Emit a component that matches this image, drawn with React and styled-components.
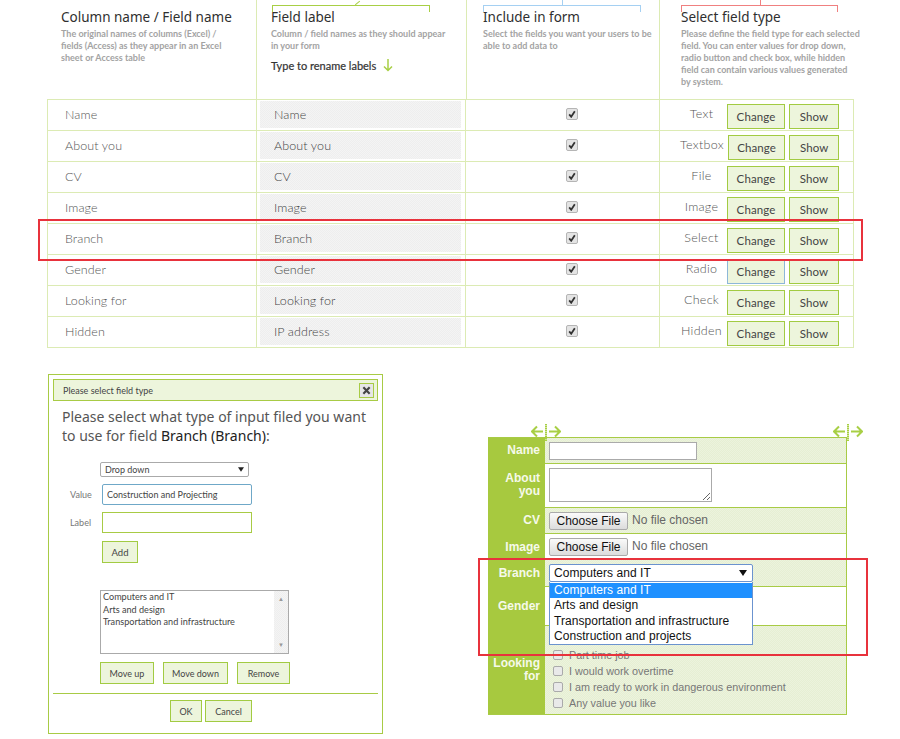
import React from "react";
import styled, { createGlobalStyle, css } from "styled-components";

const Global = createGlobalStyle`
  html, body { margin: 0; padding: 0; background: #fff; }
  #root { width: 900px; height: 739px; overflow: hidden; }
`;

const GREEN = "#a8cb45";
const PALE = "#dcebb4";
const hatchGrey = css`
  background: repeating-conic-gradient(#eeeeee 0 25%, #f4f4f4 0 50%) 0 0 / 2px 2px;
`;
const hatchGreen = css`
  background: repeating-conic-gradient(#e6efd3 0 25%, #ecf3dd 0 50%) 0 0 / 2px 2px;
`;
const UI = `"Lato", "Open Sans", sans-serif`;

const Page = styled.div`
  position: relative;
  width: 900px;
  height: 739px;
  overflow: hidden;
  font-family: ${UI};
  color: #333;
`;
const Header = styled.div`
  display: grid;
  grid-template-columns: 209px 210px 193px 195px;
  height: 99px;
  margin-left: 47px;
`;
const HeadCell = styled.div`
  position: relative;
  box-sizing: border-box;
  padding: 9px 0 0 ${(p) => p.$pad}px;
  border-left: ${(p) => (p.$line ? `1px solid ${PALE}` : "0")};
`;
const HeadTitle = styled.h2`
  margin: 0;
  font-size: 13.5px;
  line-height: 17px;
  font-weight: 400;
  font-family: "Noto Sans", sans-serif;
  color: #2f2f2f;
  white-space: nowrap;
`;
const HeadText = styled.p`
  margin: 2px 0 0;
  font-size: 9px;
  line-height: 12px;
  font-weight: 700;
  color: #a3a3a3;
  white-space: nowrap;
`;
const Hint = styled.div`
  display: flex;
  align-items: center;
  gap: 7px;
  margin-top: 7px;
  font-size: 11px;
  font-weight: 400;
  -webkit-text-stroke: 0.2px #333;
  color: #333;
`;
const Bracket = styled.div`
  position: absolute;
  top: 5px;
  left: ${(p) => p.$left}px;
  width: ${(p) => p.$width}px;
  height: 7px;
  box-sizing: border-box;
  border: 1px solid ${(p) => p.$color};
  border-bottom: 0;
  &::before {
    content: "";
    position: absolute;
    left: ${(p) => p.$tick}px;
    top: -6px;
    width: 1px;
    height: 6px;
    background: ${(p) => p.$color};
    transform: rotate(${(p) => p.$tilt || 0}deg);
  }
`;
const Table = styled.div`
  margin-left: 47px;
  width: 807px;
  border: 1px solid ${PALE};
  border-bottom: 0;
  box-sizing: border-box;
`;
const Row = styled.div`
  display: grid;
  grid-template-columns: 208px 209px 194px 194px;
  height: 31px;
  box-sizing: border-box;
  border-bottom: 1px solid ${PALE};
`;
const Cell = styled.div`
  display: flex;
  align-items: center;
  box-sizing: border-box;
  border-left: ${(p) => (p.$line ? `1px solid ${PALE}` : "0")};
`;
const NameCell = styled(Cell)`
  padding: 0 0 2px 17px;
  font-size: 12.5px;
  font-weight: 300;
  letter-spacing: 0.1px;
  color: #555;
`;
const LabelCell = styled(Cell)`
  padding: 1px 4px 2px 3px;
`;
const RenameInput = styled.input`
  width: 100%;
  height: 100%;
  box-sizing: border-box;
  border: 0;
  outline: 0;
  padding: 0 0 0 14px;
  ${hatchGrey};
  font: 300 12.5px ${UI};
  letter-spacing: 0.1px;
  color: #444;
`;
const CheckCell = styled(Cell)`
  justify-content: center;
  padding: 0 0 3px 18px;
`;
const Check = styled.span`
  display: inline-flex;
  align-items: center;
  justify-content: center;
  width: 10px;
  height: 10px;
  border: 1px solid #b5b5b5;
  border-radius: 2px;
  background: #e4e4e4;
`;
const TypeCell = styled(Cell)`
  padding-right: 14px;
  gap: 4px;
`;
const TypeName = styled.span`
  flex: 0 0 63px;
  box-sizing: border-box;
  text-align: center;
  padding: 0 0 3px 20px;
  font-size: 12.5px;
  font-weight: 300;
  letter-spacing: 0.3px;
  color: #555;
  white-space: nowrap;
`;
const Btn = styled.button`
  box-sizing: border-box;
  width: ${(p) => p.$w}px;
  height: ${(p) => p.$h || 22}px;
  padding: 0;
  border: 1px solid ${(p) => (p.$focus ? "#8db7d8" : "#a2cb42")};
  background: #edf5dc;
  font: 400 ${(p) => p.$size || 9}px ${UI};
  color: #444;
`;
const RowBtn = styled(Btn)`
  margin-top: 3px;
  padding-bottom: 1px;
  font-size: 11.5px;
  letter-spacing: 0.1px;
`;
const Bottom = styled.div`
  display: flex;
  align-items: flex-start;
  margin: 26px 0 0 48px;
`;
const Dialog = styled.div`
  box-sizing: border-box;
  width: 335px;
  height: 360px;
  border: 1px solid ${GREEN};
  padding: 4px;
`;
const TitleBar = styled.div`
  display: flex;
  align-items: center;
  justify-content: space-between;
  box-sizing: border-box;
  height: 22px;
  padding: 0 3px 0 9px;
  border: 1px solid ${GREEN};
  background: #edf5dc;
  font-size: 9px;
  color: #444;
`;
const CloseBtn = styled.div`
  display: flex;
  align-items: center;
  justify-content: center;
  width: 15px;
  height: 15px;
  box-sizing: border-box;
  border: 1px solid ${GREEN};
  background: #e6e6e6;
`;
const DialogHeading = styled.div`
  margin: 6px 0 0 9px;
  font-family: "Noto Sans", sans-serif;
  font-size: 14px;
  line-height: 19px;
  font-weight: 400;
  color: #555;
  white-space: nowrap;
  b { font-weight: 400; color: #222; }
`;
const FakeSelect = styled.div`
  display: flex;
  align-items: center;
  justify-content: space-between;
  box-sizing: border-box;
  margin: 17px 0 0 47px;
  width: 149px;
  height: 15px;
  padding: 0 4px;
  border: 1px solid #aaa;
  border-radius: 2px;
  font-size: 9px;
  color: #444;
`;
const FieldRow = styled.div`
  display: grid;
  grid-template-columns: 32px 150px;
  align-items: center;
  margin: 7px 0 0 17px;
`;
const FieldLabel = styled.label`
  font-size: 9px;
  color: #777;
`;
const DialogInput = styled.input`
  box-sizing: border-box;
  width: 150px;
  height: ${(p) => p.$h}px;
  padding: 0 4px;
  border: 1px solid ${(p) => (p.$focus ? "#6fa8c8" : GREEN)};
  border-radius: ${(p) => (p.$focus ? 2 : 0)}px;
  outline: 0;
  font: 400 9px ${UI};
  color: #444;
`;
const AddBtn = styled(Btn)`
  display: block;
  margin: 8px 0 0 49px;
`;
const ListBox = styled.div`
  display: flex;
  box-sizing: border-box;
  margin: 27px 0 0 47px;
  width: 189px;
  height: 64px;
  border: 1px solid #aaa;
`;
const ListItems = styled.ul`
  flex: 1;
  margin: 0;
  padding: 0 0 0 2px;
  list-style: none;
  font-size: 9.1px;
  line-height: 12.6px;
  color: #444;
`;
const ScrollTrack = styled.div`
  display: flex;
  flex-direction: column;
  justify-content: space-between;
  align-items: center;
  width: 14px;
  padding: 5px 0;
  box-sizing: border-box;
  ${hatchGrey};
  font-size: 6px;
  line-height: 6px;
  color: #999;
`;
const MoveBar = styled.div`
  display: flex;
  gap: 9px;
  margin: 8px 0 0 47px;
`;
const Separator = styled.hr`
  margin: 9px 0 0;
  border: 0;
  border-top: 1px solid ${GREEN};
`;
const DialogActions = styled.div`
  display: flex;
  justify-content: center;
  gap: 3px;
  margin: 6px 0 0 -9px;
`;
const Form = styled.div`
  position: relative;
  box-sizing: border-box;
  width: 359px;
  margin: 63px 0 0 105px;
  border: 1px solid ${GREEN};
  border-left: 0;
  font-family: "Liberation Sans", Arial, sans-serif;
  font-size: 12px;
`;
const FormRow = styled.div`
  display: grid;
  grid-template-columns: 57px 1fr;
  height: ${(p) => p.$h}px;
  box-sizing: border-box;
  border-top: ${(p) => (p.$first ? "0" : `1px solid ${GREEN}`)};
  ${(p) => p.$hatch && hatchGreen};
`;
const FormLabel = styled.div`
  display: flex;
  align-items: center;
  justify-content: flex-end;
  text-align: right;
  box-sizing: border-box;
  margin-top: ${(p) => (p.$first ? 0 : -1)}px;
  padding: ${(p) => (p.$drop ? "2px" : "0")} 5px 0 0;
  background: #a7c93f;
  color: #f6f9ea;
  font-weight: 700;
  line-height: 13px;
`;
const FormField = styled.div`
  display: flex;
  align-items: ${(p) => p.$align || "center"};
  padding: 0 0 ${(p) => p.$lift || 0}px 4px;
  color: #666;
`;
const NameInput = styled.input`
  box-sizing: border-box;
  width: 148px;
  height: 18px;
  border: 1px solid #aaa;
  outline: 0;
  background: #fff;
`;
const AboutInput = styled.textarea`
  box-sizing: border-box;
  width: 163px;
  height: 34px;
  margin: 0;
  border: 1px solid #aaa;
  outline: 0;
`;
const FileButton = styled.button`
  box-sizing: border-box;
  width: 79px;
  height: 18px;
  padding: 0;
  border: 1px solid #aaa;
  border-radius: 2px;
  background: linear-gradient(#fafafa, #dcdcdc);
  font: 400 12px "Liberation Sans", Arial, sans-serif;
  color: #111;
`;
const FileText = styled.span`
  margin: -2px 0 0 4px;
`;
const BranchSelect = styled.div`
  display: flex;
  align-items: center;
  justify-content: space-between;
  box-sizing: border-box;
  width: 204px;
  height: 18px;
  padding: 0 5px 0 4px;
  border: 1px solid #6b93cf;
  border-radius: 2px;
  background: #fff;
  color: #111;
  letter-spacing: 0.05px;
`;
const Options = styled.ul`
  position: absolute;
  z-index: 2;
  left: 61px;
  top: 144px;
  box-sizing: border-box;
  width: 204px;
  height: 63px;
  margin: 0;
  padding: 1px 0 0;
  list-style: none;
  background: #fff;
  border: 1px solid #6b93cf;
  border-top: 0;
  color: #111;
  line-height: 15.3px;
  letter-spacing: 0.05px;
`;
const Option = styled.li`
  padding-left: 4px;
  ${(p) => p.$active && css`background: #1e90ff; color: #fff;`};
`;
const CheckList = styled.div`
  display: flex;
  flex-direction: column;
  padding: 21px 0 0 4px;
  line-height: 16px;
`;
const CheckLine = styled.div`
  display: flex;
  align-items: center;
  gap: 6px;
  color: #777;
  height: 16px;
  font-size: 10.8px;
`;
const BlankBox = styled.span`
  display: inline-block;
  width: 8px;
  height: 8px;
  border: 1px solid #aaa;
  border-radius: 2px;
  background: #e9e9e9;
`;
const Marker = styled.svg`
  position: absolute;
  top: -16px;
  left: ${(p) => p.$left}px;
`;
const RedBox = styled.div`
  position: absolute;
  z-index: 3;
  box-sizing: border-box;
  left: ${(p) => p.$x}px;
  top: ${(p) => p.$y}px;
  width: ${(p) => p.$w}px;
  height: ${(p) => p.$h}px;
  border: 2px solid #e8323c;
  pointer-events: none;
`;

const ticks = (
  <svg width="8" height="8" viewBox="0 0 10 10" aria-hidden="true">
    <path d="M1.5 5.5 L4 8.5 L8.5 1.5" fill="none" stroke="#333" strokeWidth="2.2" />
  </svg>
);

const rows = [
  ["Name", "Name", "Text"],
  ["About you", "About you", "Textbox"],
  ["CV", "CV", "File"],
  ["Image", "Image", "Image"],
  ["Branch", "Branch", "Select"],
  ["Gender", "Gender", "Radio"],
  ["Looking for", "Looking for", "Check"],
  ["Hidden", "IP address", "Hidden"],
];

function ResizeMark({ left }) {
  return (
    <Marker $left={left} width="30" height="20" viewBox="0 0 30 20" aria-hidden="true">
      <path d="M12 9.500H1M6 4.500 1 9.500l5 5M18 9.500h11M24 4.500l5 5-5 5" fill="none" stroke="#a8cf45" strokeWidth="2" />
      <path d="M15 2v17" stroke="#a8cf45" strokeWidth="2" strokeDasharray="1.500 .5" />
    </Marker>
  );
}

export default function App() {
  return (
    <Page>
      <Global />
      <Header>
        <HeadCell $pad={14}>
          <HeadTitle>Column name / Field name</HeadTitle>
          <HeadText>
            The original names of columns (Excel) /<br />
            fields (Access) as they appear in an Excel<br />
            sheet or Access table
          </HeadText>
        </HeadCell>
        <HeadCell $pad={14} $line>
          <Bracket $left={15} $width={158} $color="#a8cf45" $tick={84} $tilt={50} />
          <HeadTitle>Field label</HeadTitle>
          <HeadText>
            Column / field names as they should appear<br />
            in your form
          </HeadText>
          <Hint>
            Type to rename labels
            <svg width="10" height="13" viewBox="0 0 10 13" aria-hidden="true">
              <path d="M5 0v11.500M1 7.500l4 4 4-4" fill="none" stroke="#a8cf45" strokeWidth="1.500" />
            </svg>
          </Hint>
        </HeadCell>
        <HeadCell $pad={16} $line>
          <Bracket $left={16} $width={158} $color="#a5d0f2" $tick={78} />
          <HeadTitle>Include in form</HeadTitle>
          <HeadText>
            Select the fields you want your users to be<br />
            able to add data to
          </HeadText>
        </HeadCell>
        <HeadCell $pad={21} $line>
          <Bracket $left={21} $width={157} $color="#f08080" $tick={78} />
          <HeadTitle>Select field type</HeadTitle>
          <HeadText>
            Please define the field type for each selected<br />
            field. You can enter values for drop down,<br />
            radio button and check box, while hidden<br />
            field can contain various values generated<br />
            by system.
          </HeadText>
        </HeadCell>
      </Header>
      <Table>
        {rows.map(([name, label, type]) => (
          <Row key={name}>
            <NameCell>{name}</NameCell>
            <LabelCell $line>
              <RenameInput readOnly value={label} />
            </LabelCell>
            <CheckCell $line>
              <Check>{ticks}</Check>
            </CheckCell>
            <TypeCell $line>
              <TypeName>{type}</TypeName>
              <RowBtn $w={58} $h={25} $focus={type === "Radio"}>Change</RowBtn>
              <RowBtn $w={50} $h={25}>Show</RowBtn>
            </TypeCell>
          </Row>
        ))}
      </Table>
      <Bottom>
        <Dialog>
          <TitleBar>
            Please select field type
            <CloseBtn>
              <svg width="9" height="9" viewBox="0 0 10 10" aria-hidden="true">
                <path d="M1.500 1.500l7 7M8.500 1.500l-7 7" stroke="#444" strokeWidth="2.400" />
              </svg>
            </CloseBtn>
          </TitleBar>
          <DialogHeading>
            Please select what type of input filed you want<br />
            to use for field <b>Branch (Branch)</b>:
          </DialogHeading>
          <FakeSelect>
            Drop down
            <svg width="6" height="5" viewBox="0 0 8 6" aria-hidden="true">
              <path d="M0 0h8L4 6z" fill="#222" />
            </svg>
          </FakeSelect>
          <FieldRow>
            <FieldLabel>Value</FieldLabel>
            <DialogInput $h={21} $focus readOnly value="Construction and Projecting" />
          </FieldRow>
          <FieldRow>
            <FieldLabel>Label</FieldLabel>
            <DialogInput $h={21} readOnly value="" />
          </FieldRow>
          <AddBtn $w={36} $size={9.5}>Add</AddBtn>
          <ListBox>
            <ListItems>
              <li>Computers and IT</li>
              <li>Arts and design</li>
              <li>Transportation and infrastructure</li>
            </ListItems>
            <ScrollTrack>
              <span>▲</span>
              <span>▼</span>
            </ScrollTrack>
          </ListBox>
          <MoveBar>
            <Btn $w={54}>Move up</Btn>
            <Btn $w={65}>Move down</Btn>
            <Btn $w={53}>Remove</Btn>
          </MoveBar>
          <Separator />
          <DialogActions>
            <Btn $w={32}>OK</Btn>
            <Btn $w={47}>Cancel</Btn>
          </DialogActions>
        </Dialog>
        <Form>
          <ResizeMark left={43} />
          <ResizeMark left={345} />
          <FormRow $first $hatch $h={25}>
            <FormLabel $first>Name</FormLabel>
            <FormField><NameInput readOnly /></FormField>
          </FormRow>
          <FormRow $h={44}>
            <FormLabel>About<br />you</FormLabel>
            <FormField $lift={1}><AboutInput readOnly /></FormField>
          </FormRow>
          <FormRow $hatch $h={26}>
            <FormLabel>CV</FormLabel>
            <FormField><FileButton>Choose File</FileButton><FileText>No file chosen</FileText></FormField>
          </FormRow>
          <FormRow $h={26}>
            <FormLabel $drop>Image</FormLabel>
            <FormField><FileButton>Choose File</FileButton><FileText>No file chosen</FileText></FormField>
          </FormRow>
          <FormRow $hatch $h={27}>
            <FormLabel $drop>Branch</FormLabel>
            <FormField>
              <BranchSelect>
                Computers and IT
                <svg width="8" height="6" viewBox="0 0 8 6" aria-hidden="true">
                  <path d="M0 0h8L4 6z" fill="#111" />
                </svg>
              </BranchSelect>
            </FormField>
          </FormRow>
          <FormRow $h={39}>
            <FormLabel $drop>Gender</FormLabel>
            <FormField />
          </FormRow>
          <FormRow $hatch $h={89}>
            <FormLabel>Looking<br />for</FormLabel>
            <FormField $align="flex-start">
              <CheckList>
                {["Part time job", "I would work overtime", "I am ready to work in dangerous environment", "Any value you like"].map((t) => (
                  <CheckLine key={t}><BlankBox />{t}</CheckLine>
                ))}
              </CheckList>
            </FormField>
          </FormRow>
          <Options>
            <Option $active>Computers and IT</Option>
            <Option>Arts and design</Option>
            <Option>Transportation and infrastructure</Option>
            <Option>Construction and projects</Option>
          </Options>
        </Form>
      </Bottom>
      <RedBox $x={38} $y={219} $w={825} $h={42} />
      <RedBox $x={478} $y={558} $w={390} $h={98} />
    </Page>
  );
}
